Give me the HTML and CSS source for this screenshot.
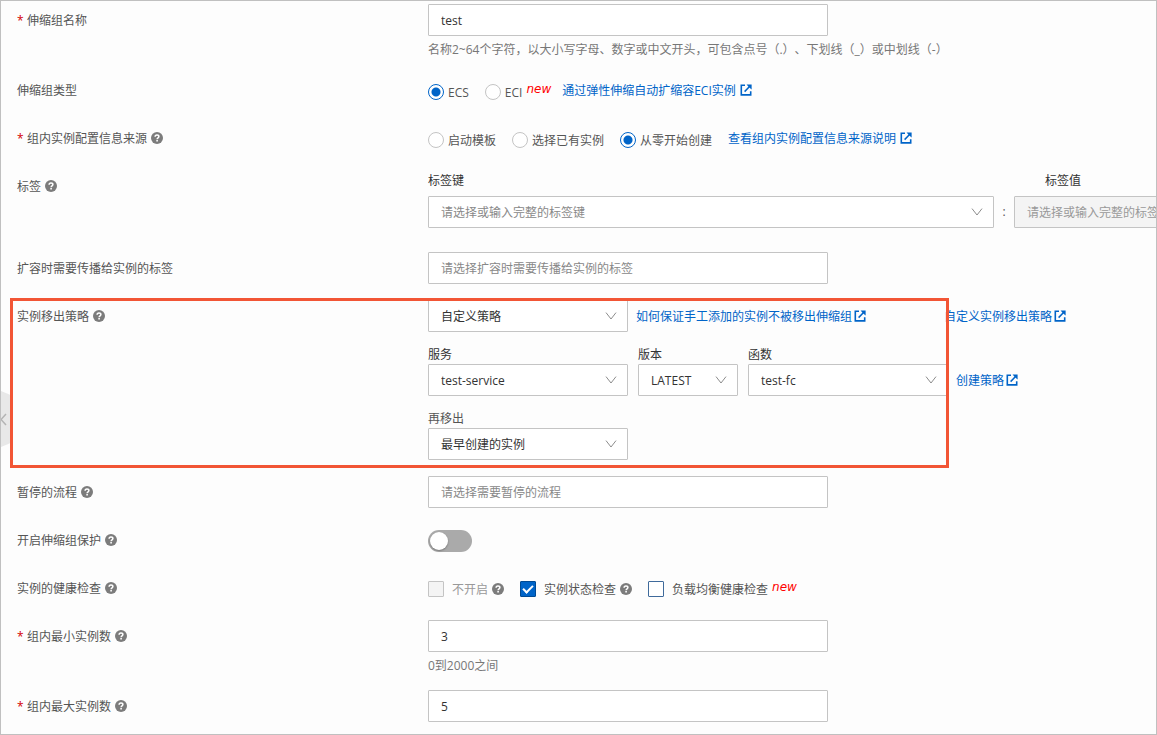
FILE: index.html
```html
<!DOCTYPE html>
<html lang="zh-CN">
<head>
<meta charset="utf-8">
<meta name="viewport" content="width=device-width, initial-scale=1">
<title>伸缩组</title>
<link rel="stylesheet" href="styles.css">
</head>
<body>
<svg class="sprite" aria-hidden="true">
  <symbol id="help" viewBox="0 0 12 12">
    <circle cx="6" cy="6" r="6" fill="#7c7c7c"/>
    <path d="M4.1 4.7C4.1 3.5 4.9 2.9 6 2.9s1.9.7 1.9 1.6c0 1.3-1.8 1.3-1.8 2.7" fill="none" stroke="#fff" stroke-width="1.5"/>
    <rect x="5.3" y="8" width="1.6" height="1.5" fill="#fff"/>
  </symbol>
  <symbol id="external" viewBox="0 0 12 12">
    <path d="M5 1.3H1.3v9.6h9.4V7.3" fill="none" stroke="currentColor" stroke-width="1.6"/>
    <path d="M4.6 7.6L9.8 2.3" fill="none" stroke="currentColor" stroke-width="1.5"/>
    <path d="M6.6.5h5v5L9.9 3.9 8.1 2.2z" fill="currentColor"/>
  </symbol>
  <symbol id="chevron" viewBox="0 0 12 8">
    <path d="M1 .6L6 7l5-6.4" fill="none" stroke="#8c8c8c" stroke-width="1"/>
  </symbol>
</svg>

<svg class="handle" viewBox="0 0 12 56" aria-hidden="true">
  <path d="M0 0l12 5v46L0 56z" fill="#e8e8e8"/>
  <path d="M5 23l-5 5.500 5 5.500" fill="none" stroke="#b4b4b4" stroke-width="1.500"/>
</svg>

<form class="form">
  <div class="row">
    <label class="name" for="group-name"><span class="required">*</span>伸缩组名称</label>
    <div class="content">
      <input class="control wide" id="group-name" type="text" value="test">
      <p class="hint">名称2~64个字符，以大小写字母、数字或中文开头，可包含点号（.）、下划线（_）或中划线（-）</p>
    </div>
  </div>

  <div class="row">
    <span class="name">伸缩组类型</span>
    <div class="content line">
      <label class="radio"><input type="radio" name="type" checked>ECS</label>
      <label class="radio"><input type="radio" name="type">ECI</label>
      <em class="new">new</em>
      <a class="link after-new" href="#">通过弹性伸缩自动扩缩容ECI实例<svg class="icon spaced"><use href="#external"/></svg></a>
    </div>
  </div>

  <div class="row">
    <span class="name"><span class="required">*</span>组内实例配置信息来源<svg class="icon help"><use href="#help"/></svg></span>
    <div class="content line">
      <label class="radio"><input type="radio" name="source">启动模板</label>
      <label class="radio"><input type="radio" name="source">选择已有实例</label>
      <label class="radio"><input type="radio" name="source" checked>从零开始创建</label>
      <a class="link" href="#">查看组内实例配置信息来源说明<svg class="icon spaced"><use href="#external"/></svg></a>
    </div>
  </div>

  <div class="row">
    <span class="name">标签<svg class="icon help"><use href="#help"/></svg></span>
    <div class="content tags">
      <div class="tag-key">
        <label class="caption" for="tag-key">标签键</label>
        <span class="select"><select class="control muted" id="tag-key"><option>请选择或输入完整的标签键</option></select><svg class="chevron"><use href="#chevron"/></svg></span>
      </div>
      <span class="colon">:</span>
      <div class="tag-value">
        <label class="caption" for="tag-value">标签值</label>
        <select class="control muted" id="tag-value" disabled><option>请选择或输入完整的标签值</option></select>
      </div>
    </div>
  </div>

  <div class="row">
    <label class="name" for="spread">扩容时需要传播给实例的标签</label>
    <div class="content"><input class="control wide" id="spread" type="text" placeholder="请选择扩容时需要传播给实例的标签"></div>
  </div>

  <div class="row framed">
    <label class="name" for="policy">实例移出策略<svg class="icon help"><use href="#help"/></svg></label>
    <div class="content policy">
      <div class="line fields">
        <span class="select medium"><select class="control" id="policy"><option>自定义策略</option></select><svg class="chevron"><use href="#chevron"/></svg></span>
        <a class="link manual" href="#">如何保证手工添加的实例不被移出伸缩组<svg class="icon"><use href="#external"/></svg></a>
        <a class="link custom" href="#">自定义实例移出策略<svg class="icon"><use href="#external"/></svg></a>
      </div>
      <div class="line fields">
        <div class="medium">
          <label class="field-label" for="service">服务</label>
          <span class="select"><select class="control" id="service"><option>test-service</option></select><svg class="chevron"><use href="#chevron"/></svg></span>
        </div>
        <div class="small">
          <label class="field-label" for="version">版本</label>
          <span class="select"><select class="control" id="version"><option>LATEST</option></select><svg class="chevron"><use href="#chevron"/></svg></span>
        </div>
        <div class="medium">
          <label class="field-label" for="function">函数</label>
          <span class="select"><select class="control" id="function"><option>test-fc</option></select><svg class="chevron"><use href="#chevron"/></svg></span>
        </div>
        <a class="link create" href="#">创建策略<svg class="icon"><use href="#external"/></svg></a>
      </div>
      <div class="medium">
        <label class="field-label soft" for="then">再移出</label>
        <span class="select"><select class="control" id="then"><option>最早创建的实例</option></select><svg class="chevron"><use href="#chevron"/></svg></span>
      </div>
    </div>
  </div>

  <div class="row">
    <label class="name" for="paused">暂停的流程<svg class="icon help"><use href="#help"/></svg></label>
    <div class="content"><input class="control wide" id="paused" type="text" placeholder="请选择需要暂停的流程"></div>
  </div>

  <div class="row">
    <label class="name" for="protect">开启伸缩组保护<svg class="icon help"><use href="#help"/></svg></label>
    <div class="content line checks"><input class="switch" id="protect" type="checkbox" role="switch"></div>
  </div>

  <div class="row">
    <span class="name">实例的健康检查<svg class="icon help"><use href="#help"/></svg></span>
    <div class="content line checks">
      <label class="check off"><input type="checkbox" disabled>不开启<svg class="icon help"><use href="#help"/></svg></label>
      <label class="check"><input type="checkbox" checked>实例状态检查<svg class="icon help"><use href="#help"/></svg></label>
      <label class="check"><input type="checkbox">负载均衡健康检查</label>
      <em class="new">new</em>
    </div>
  </div>

  <div class="row">
    <label class="name" for="min"><span class="required">*</span>组内最小实例数<svg class="icon help"><use href="#help"/></svg></label>
    <div class="content">
      <input class="control wide" id="min" type="text" inputmode="numeric" value="3">
      <p class="hint">0到2000之间</p>
    </div>
  </div>

  <div class="row">
    <label class="name" for="max"><span class="required">*</span>组内最大实例数<svg class="icon help"><use href="#help"/></svg></label>
    <div class="content"><input class="control wide" id="max" type="text" inputmode="numeric" value="5"></div>
  </div>
</form>
</body>
</html>
```

FILE: styles.css
```css
*,
*::before,
*::after {
  box-sizing: border-box;
}

body {
  position: relative;
  margin: 0;
  min-height: 100vh;
  overflow-x: hidden;
  border: 1px solid #c0c0c0;
  background: #fdfdfd;
  color: #555;
  font-family: "Open Sans", "Noto Sans CJK SC", sans-serif;
  font-size: 12px;
  text-spacing-trim: space-all;
}

.sprite {
  display: none;
}

.handle {
  position: absolute;
  top: 390px;
  left: 0;
  width: 12px;
  height: 56px;
}

.form {
  display: flex;
  flex-direction: column;
  gap: 16px;
  padding: 3px 0 12px 16px;
}

.row {
  display: grid;
  grid-template-columns: 411px minmax(0, 1fr);
  position: relative;
}

.name {
  display: flex;
  align-items: center;
  height: 32px;
  white-space: nowrap;
}

.required {
  width: 10px;
  color: #d40000;
}

.icon {
  flex: none;
  width: 12px;
  height: 12px;
}

.help {
  margin-left: 4px;
}

.content {
  min-height: 32px;
  white-space: nowrap;
}

.line {
  display: flex;
  align-items: flex-start;
}

.control {
  display: block;
  width: 100%;
  height: 32px;
  margin: 0;
  padding: 0 12px;
  border: 1px solid #c4c4c4;
  border-radius: 1px;
  background: #fff;
  color: #333;
  font: inherit;
  appearance: none;
}

.control::placeholder,
.muted {
  color: #888;
  opacity: 1;
}

.control:disabled {
  background: #f4f4f4;
  color: #999;
  opacity: 1;
}

.wide {
  width: 400px;
}

.medium {
  flex: none;
  width: 200px;
}

.small {
  flex: none;
  width: 100px;
}

.select {
  display: block;
  position: relative;
}

.chevron {
  position: absolute;
  top: 12px;
  right: 11px;
  width: 12px;
  height: 8px;
  pointer-events: none;
}

.hint {
  margin: 6px 0 0;
  color: #777;
  line-height: 16px;
}

.link {
  display: flex;
  align-items: center;
  height: 32px;
  color: #0064c8;
  text-decoration: none;
}

.link .icon {
  margin-left: 2px;
}

.link .spaced {
  margin-left: 4px;
}

.radio,
.check {
  display: flex;
  align-items: center;
  margin-right: 16px;
}

.radio {
  gap: 4px;
  height: 32px;
  padding-top: 4px;
}

.radio input {
  width: 16px;
  height: 16px;
  margin: 0;
  border: 1px solid #c4c4c4;
  border-radius: 50%;
  background: #fff;
  appearance: none;
}

.radio input:checked {
  border-color: #0064c8;
  background: radial-gradient(circle, #0064c8 4px, #fff 5px);
}

.new {
  margin-left: -12px;
  color: #f00;
  font-family: "DejaVu Sans", sans-serif;
  line-height: 30px;
}

.after-new {
  margin-left: 11px;
}

.tags {
  display: flex;
  align-items: flex-end;
  padding-bottom: 8px;
}

.tag-key {
  flex: 1;
}

.tag-value {
  flex: none;
  width: 142px;
  overflow: hidden;
}

.tag-value .control {
  width: 200px;
}

.caption,
.field-label {
  display: block;
  color: #333;
}

.caption {
  margin-bottom: 4px;
  line-height: 22px;
}

.field-label {
  line-height: 18px;
}

.tag-value .caption {
  padding-left: 31px;
}

.colon {
  width: 20px;
  line-height: 32px;
  text-align: center;
}

.framed::after {
  content: "";
  position: absolute;
  top: -2px;
  bottom: -8px;
  left: -7px;
  width: 939px;
  border: 3px solid #f25535;
  pointer-events: none;
}

.policy {
  display: flex;
  flex-direction: column;
  gap: 14px;
}

.fields {
  align-items: flex-end;
  gap: 10px;
}

.manual {
  margin-left: -2px;
}

.custom {
  margin-left: 68px;
}

.create {
  margin-left: -2px;
}

.soft {
  color: #555;
}

.checks {
  padding-top: 2px;
}

.check {
  height: 30px;
}

.check input {
  display: grid;
  place-items: center;
  width: 16px;
  height: 16px;
  margin: 0 8px 0 0;
  border: 1px solid #3f6a9b;
  border-radius: 1px;
  background: #fff;
  appearance: none;
}

.check input:checked {
  border-color: #004a94;
  background: #0064c8;
}

.check input:checked::after {
  content: "";
  width: 10px;
  height: 6px;
  margin-bottom: 3px;
  border: solid #fff;
  border-width: 0 0 2px 2px;
  transform: rotate(-45deg);
}

.check input:disabled {
  border-color: #c4c4c4;
  background: #f4f4f4;
}

.off {
  color: #999;
}

.checks .new {
  line-height: 26px;
}

.switch {
  width: 44px;
  height: 22px;
  margin: 4px 0 0;
  padding: 2px;
  border-radius: 11px;
  background: #aaa;
  appearance: none;
}

.switch::before {
  content: "";
  display: block;
  width: 18px;
  height: 18px;
  border-radius: 50%;
  background: #fff;
  box-shadow: 0 1px 2px rgba(0, 0, 0, 0.3);
}

.switch:checked {
  background: #0064c8;
}

.switch:checked::before {
  margin-left: auto;
}
```
